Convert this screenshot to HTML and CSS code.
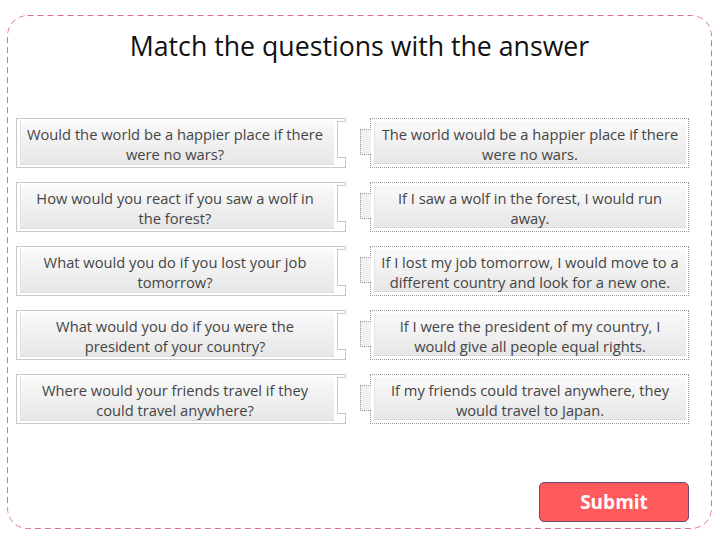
FILE: index.html
```html
<!DOCTYPE html>
<html lang="en">
<head>
<meta charset="utf-8">
<title>Match the questions</title>
<link rel="stylesheet" href="styles.css">
</head>
<body>
<div class="frame">
  <h1 class="title">Match the questions with the answer</h1>
  <div class="pairs">
    <div class="card q"><div class="face">Would the world be a happier place if there were no wars?</div></div>
    <div class="card a"><div class="face">The world would be a happier place if there were no wars.</div></div>
    <div class="card q"><div class="face">How would you react if you saw a wolf in the forest?</div></div>
    <div class="card a"><div class="face">If I saw a wolf in the forest, I would run away.</div></div>
    <div class="card q"><div class="face">What would you do if you lost your job tomorrow?</div></div>
    <div class="card a"><div class="face">If I lost my job tomorrow, I would move to a different country and look for a new one.</div></div>
    <div class="card q"><div class="face">What would you do if you were the president of your country?</div></div>
    <div class="card a"><div class="face">If I were the president of my country, I would give all people equal rights.</div></div>
    <div class="card q"><div class="face">Where would your friends travel if they could travel anywhere?</div></div>
    <div class="card a"><div class="face">If my friends could travel anywhere, they would travel to Japan.</div></div>
  </div>
  <div class="actions"><button class="submit" type="button">Submit</button></div>
</div>
</body>
</html>
```
FILE: styles.css
```css
html, body {
  margin: 0;
  padding: 0;
  background: #fff;
}
body {
  font-family: "Open Sans", "Liberation Sans", sans-serif;
  width: 720px;
  height: 540px;
  overflow: hidden;
}
.frame {
  box-sizing: border-box;
  margin: 15px 0 0 7px;
  width: 705px;
  height: 514px;
  border-radius: 20px;
  background-image: url("data:image/svg+xml,%3Csvg xmlns='http://www.w3.org/2000/svg' width='705' height='514'%3E%3Crect x='0.5' y='0.5' width='704' height='513' rx='20' ry='20' fill='none' stroke='%23dc7086' stroke-width='1' stroke-dasharray='6 4'/%3E%3C/svg%3E");
  background-repeat: no-repeat;
  padding: 13px 23px 7px 9px;
  display: flex;
  flex-direction: column;
}
.title {
  margin: 0;
  font-size: 26.7px;
  line-height: 36px;
  font-weight: 400;
  color: #111;
  text-align: center;
  padding-left: 14px;
}
.pairs {
  margin-top: 54px;
  display: grid;
  grid-template-columns: 330px 319px;
  column-gap: 24px;
  row-gap: 14px;
}
.card {
  position: relative;
  box-sizing: border-box;
  height: 50px;
  display: flex;
}
.face {
  flex: 1;
  display: flex;
  align-items: center;
  justify-content: center;
  text-align: center;
  padding: 1px 9px 0 5px;
  font-size: 14.7px;
  line-height: 20px;
  color: #454545;
  background: linear-gradient(#fafafa, #e6e6e6);
  box-shadow: inset 0 -1px 0 #dcdcdc, inset 1px 0 0 #e4e4e4;
}
.q {
  border: 1px solid #c8c8c8;
  padding: 2px 11px 2px 3px;
}
.q::after {
  content: "";
  position: absolute;
  right: -1px;
  top: 2px;
  bottom: 9px;
  width: 8px;
  border: 1px solid #c8c8c8;
  border-right: none;
  background: #fff;
}
.a {
  border: 1px dotted #9a9a9a;
  padding: 3px 2px 3px 3px;
}
.a .face {
  padding: 1px 5px 0;
}
.a::before {
  content: "";
  position: absolute;
  left: -11px;
  top: 10px;
  width: 10px;
  height: 24px;
  border: 1px dotted #9a9a9a;
  border-right: none;
  background: #f1f1f1;
}
.actions {
  margin-top: auto;
  display: flex;
  justify-content: flex-end;
}
.submit {
  width: 150px;
  height: 40px;
  background: #ff5a5c;
  border: 1px solid #6b4a72;
  border-radius: 5px;
  color: #fff;
  font-family: "Open Sans", "Liberation Sans", sans-serif;
  font-weight: 700;
  font-size: 19px;
  padding: 0;
  cursor: pointer;
}
```
